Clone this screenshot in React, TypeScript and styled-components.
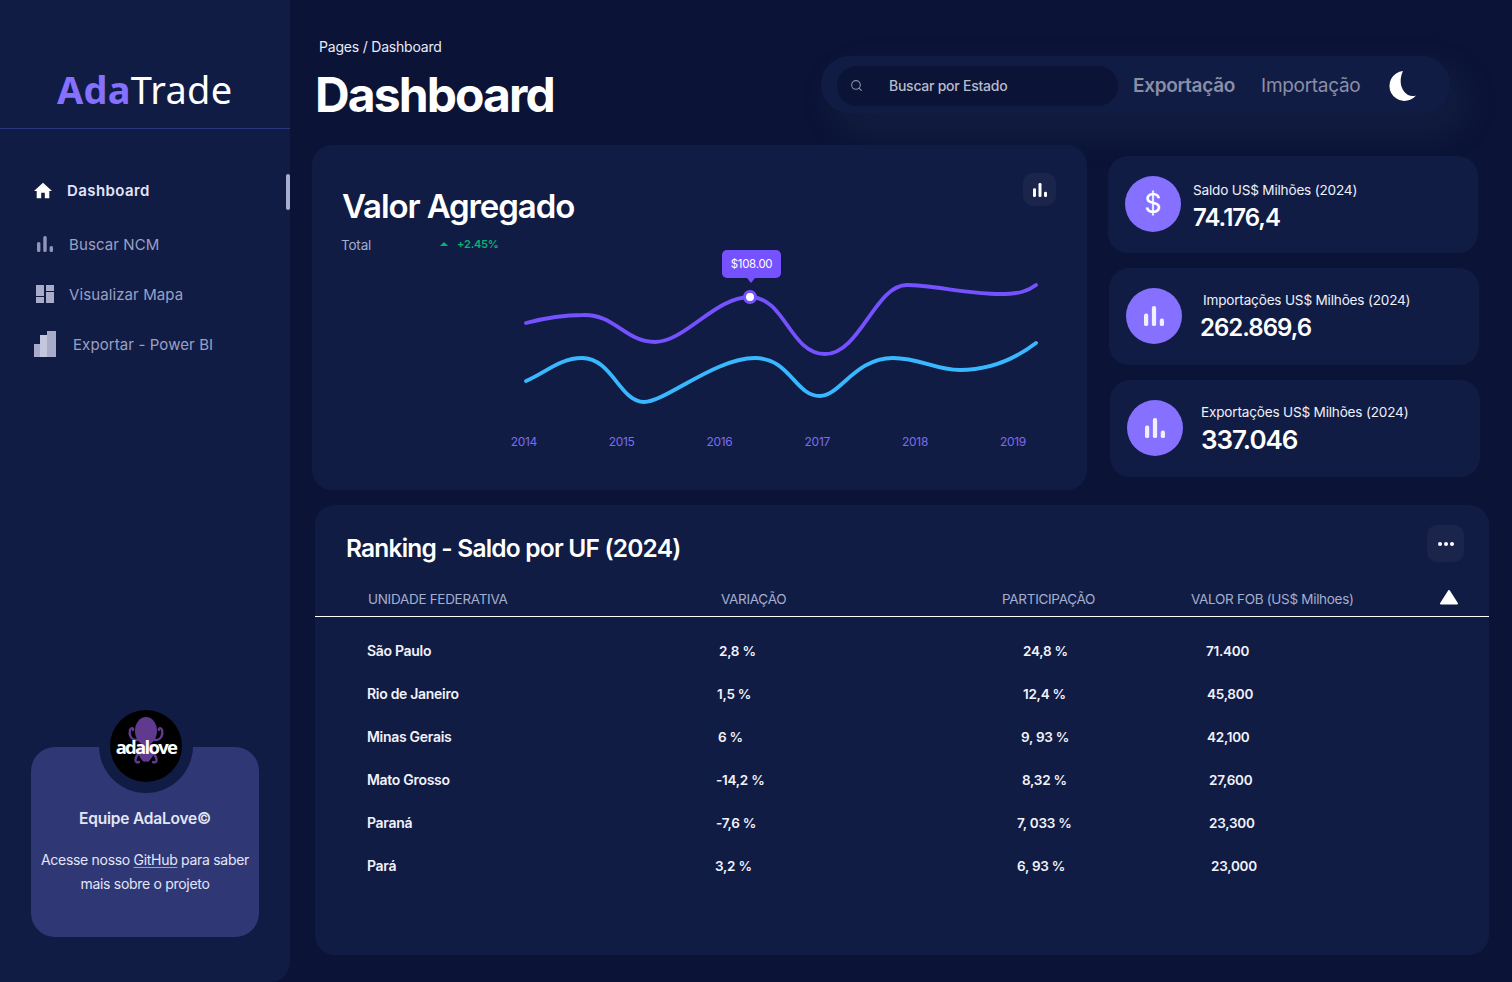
import React from "react";
import styled, { createGlobalStyle } from "styled-components";
import { Search } from "lucide-react";

const colors = {
  bg: "#0b1437",
  card: "#111c44",
  purple: "#7551ff",
  soft: "#8570ff",
  blue: "#39b8ff",
  green: "#01b574",
  muted: "#a3aed0",
  button: "#1b254b",
};

const GlobalStyle = createGlobalStyle`
  html, body { margin: 0; padding: 0; background: ${colors.bg}; }
  * { box-sizing: border-box; }
  body { font-family: "Inter", "Liberation Sans", sans-serif; color: #fff; }
`;

const Page = styled.div`
  display: flex;
  width: 1512px;
  height: 982px;
  overflow: hidden;
  background: ${colors.bg};
`;

const Sidebar = styled.aside`
  display: flex;
  flex-direction: column;
  flex: none;
  width: 290px;
  height: 982px;
  background: ${colors.card};
  border-bottom-right-radius: 20px;
`;

const Logo = styled.div`
  height: 129px;
  padding: 64px 0 0 57px;
  border-bottom: 1px solid #2b3680;
  font-family: "Noto Sans", sans-serif;
  font-size: 38px;
  line-height: 50px;
  letter-spacing: 0.25px;
  b { color: ${colors.soft}; font-weight: 700; }
`;

const Nav = styled.nav`
  margin-top: 36px;
`;

const NavItem = styled.div<{ $active?: boolean }>`
  position: relative;
  display: flex;
  align-items: center;
  height: 50px;
  margin-bottom: ${(p) => (p.$active ? "4px" : "0")};
  padding-left: 34px;
  font-size: 15px;
  letter-spacing: ${(p) => (p.$active ? "0.4px" : "0.1px")};
  font-weight: ${(p) => (p.$active ? 600 : 400)};
  color: ${(p) => (p.$active ? "#e3e5f7" : "#9aa0c4")};
`;

const NavSlot = styled.span<{ $w: number; $indent: number }>`
  display: flex;
  align-items: center;
  width: ${(p) => p.$w}px;
  padding-left: ${(p) => p.$indent}px;
`;

const ActiveBar = styled.span`
  position: absolute;
  top: 9px;
  right: 0;
  width: 4px;
  height: 36px;
  border-radius: 2px;
  background: #a9add0;
`;

const Promo = styled.div`
  position: relative;
  margin: auto 0 45px 31px;
  width: 228px;
  height: 190px;
  padding-top: 62px;
  border-radius: 24px;
  background: #2f3875;
  text-align: center;
`;

const AvatarRing = styled.div`
  position: absolute;
  top: -48px;
  left: 68px;
  display: flex;
  align-items: center;
  justify-content: center;
  width: 94px;
  height: 94px;
  border-radius: 50%;
  background: ${colors.card};
`;

const Avatar = styled.div`
  position: relative;
  width: 72px;
  height: 72px;
  border-radius: 50%;
  background: #000;
  overflow: hidden;
`;

const AvatarWord = styled.span`
  position: absolute;
  top: 24px;
  left: 0;
  width: 72px;
  text-align: center;
  font-family: "Open Sans", sans-serif;
  font-size: 18.5px;
  line-height: 26px;
  font-weight: 700;
  letter-spacing: -1.7px;
  color: #fff;
`;

const PromoTitle = styled.div`
  font-size: 15.5px;
  line-height: 20px;
  font-weight: 600;
  letter-spacing: -0.2px;
  color: #e3e5f7;
`;

const PromoText = styled.p`
  margin: 19px 0 0;
  font-size: 14px;
  line-height: 24px;
  letter-spacing: -0.3px;
  color: #e3e5f7;
  u { text-underline-offset: 2px; text-decoration-thickness: 1px; text-decoration-color: #9aa0c4; }
`;

const Main = styled.main`
  flex: 1;
  display: flex;
  flex-direction: column;
`;

const Header = styled.header`
  display: flex;
  justify-content: space-between;
  align-items: flex-start;
  height: 145px;
  padding: 39px 62px 0 25px;
`;

const Crumb = styled.div`
  margin-left: 4px;
  font-size: 14px;
  line-height: 16px;
  letter-spacing: -0.2px;
  color: #e9ebf7;
`;

const PageTitle = styled.h1`
  margin: 9px 0 0;
  font-size: 48px;
  line-height: 62px;
  font-weight: 700;
  letter-spacing: -1.9px;
`;

const Pill = styled.div`
  display: flex;
  align-items: center;
  width: 629px;
  height: 57px;
  margin-top: 17px;
  padding: 2px 0 0 16px;
  border-radius: 30px;
  background: ${colors.card};
  box-shadow: 14px 17px 40px 4px rgba(112, 144, 176, 0.08);
`;

const SearchBox = styled.div`
  display: flex;
  align-items: center;
  width: 281px;
  height: 40px;
  padding-left: 13px;
  border-radius: 20px;
  background: ${colors.bg};
  color: #8a8fa8;
`;

const SearchText = styled.span`
  margin-left: 26px;
  font-size: 14px;
  font-weight: 500;
  letter-spacing: -0.25px;
  color: #b9bccb;
`;

const Tab = styled.span<{ $strong?: boolean }>`
  margin-left: ${(p) => (p.$strong ? "15px" : "26px")};
  font-size: 19px;
  letter-spacing: -0.3px;
  font-weight: ${(p) => (p.$strong ? 600 : 400)};
  color: #8a8fa8;
`;

const MoonIcon = styled.svg`
  margin-left: 28px;
`;

const TopRow = styled.div`
  display: flex;
  gap: 21px;
  padding-left: 22px;
`;

const ChartCard = styled.section`
  position: relative;
  flex: none;
  width: 775px;
  height: 345px;
  padding-top: 39px;
  border-radius: 20px;
  background: ${colors.card};
`;

const ChartTitle = styled.h2`
  margin: 0 0 0 30px;
  font-size: 33px;
  line-height: 44px;
  font-weight: 600;
  letter-spacing: -1.1px;
`;

const ChartMeta = styled.div`
  display: flex;
  align-items: center;
  height: 18px;
  margin: 8px 0 0 29px;
  font-size: 13.5px;
  letter-spacing: -0.2px;
  color: ${colors.muted};
`;

const Trend = styled.span`
  display: flex;
  align-items: center;
  gap: 9px;
  margin: -2px 0 0 69px;
  font-size: 11px;
  font-weight: 600;
  color: ${colors.green};
  letter-spacing: -0.2px;
`;

const TrendArrow = styled.i`
  width: 0;
  height: 0;
  border-left: 4px solid transparent;
  border-right: 4px solid transparent;
  border-bottom: 4px solid ${colors.green};
`;

const IconButton = styled.div<{ $size: number; $top: number; $right: number }>`
  position: absolute;
  top: ${(p) => p.$top}px;
  right: ${(p) => p.$right}px;
  display: flex;
  align-items: center;
  justify-content: center;
  gap: 2px;
  width: ${(p) => p.$size}px;
  height: ${(p) => p.$size}px;
  border-radius: 10px;
  background: ${colors.button};
`;

const ChartSvg = styled.svg`
  display: block;
  margin-top: 9px;
`;

const Tooltip = styled.div`
  position: absolute;
  top: 105px;
  left: 410px;
  width: 59px;
  height: 28px;
  border-radius: 5px;
  background: ${colors.purple};
  font-size: 11.5px;
  line-height: 28px;
  text-align: center;
  letter-spacing: -0.3px;
  &::after {
    content: "";
    position: absolute;
    left: 25px;
    bottom: -5px;
    border-left: 4px solid transparent;
    border-right: 4px solid transparent;
    border-top: 5px solid ${colors.purple};
  }
`;

const Years = styled.div`
  display: flex;
  margin-top: 6px;
  padding-left: 163px;
`;

const Year = styled.span`
  width: 97.8px;
  text-align: center;
  font-size: 12px;
  line-height: 16px;
  letter-spacing: -0.3px;
  color: #7a6cf0;
`;

const SideColumn = styled.div`
  display: flex;
  flex-direction: column;
  gap: 15px;
  padding-top: 11px;
`;

const Stat = styled.div<{ $shift: number }>`
  display: flex;
  align-items: center;
  width: 370px;
  height: 97px;
  margin-left: ${(p) => p.$shift}px;
  padding-left: 17px;
  border-radius: 20px;
  background: ${colors.card};
`;

const StatIcon = styled.div`
  display: flex;
  align-items: center;
  justify-content: center;
  flex: none;
  width: 56px;
  height: 56px;
  margin: -2px 12px 0 0;
  border-radius: 50%;
  background: ${colors.soft};
  font-size: 27px;
  font-weight: 400;
  color: #fff;
`;

const StatBody = styled.div<{ $nudge: number; $drop?: number }>`
  padding-left: ${(p) => p.$nudge}px;
  padding-top: ${(p) => p.$drop ?? 0}px;
`;

const StatLabel = styled.div<{ $indent: number }>`
  margin-left: ${(p) => p.$indent}px;
  font-size: 13.6px;
  line-height: 18px;
  letter-spacing: -0.2px;
  color: #eef0fa;
`;

const StatValue = styled.div<{ $big?: boolean }>`
  margin-top: 4px;
  font-size: ${(p) => (p.$big ? "26px" : "24px")};
  line-height: 30px;
  font-weight: 600;
  letter-spacing: -1px;
`;

const Ranking = styled.section`
  position: relative;
  width: 1174px;
  height: 450px;
  margin: 15px 0 0 25px;
  padding-top: 25px;
  border-radius: 20px;
  background: ${colors.card};
`;

const RankingTitle = styled.h2`
  margin: 0 0 0 31px;
  font-size: 24.5px;
  line-height: 36px;
  font-weight: 600;
  letter-spacing: -0.8px;
`;

const TableHead = styled.div`
  position: relative;
  display: grid;
  grid-template-columns: 353px 281px 189px 1fr;
  align-items: center;
  height: 36px;
  margin-top: 15px;
  padding-left: 53px;
  border-bottom: 1px solid #fff;
  font-size: 13.5px;
  letter-spacing: -0.3px;
  color: ${colors.muted};
`;

const SortIcon = styled.svg`
  position: absolute;
  top: 9px;
  right: 31px;
`;

const Rows = styled.div`
  padding-top: 12px;
`;

const Row = styled.div`
  display: grid;
  grid-template-columns: 348px 300px 190px 1fr;
  align-items: center;
  height: 43px;
  padding-left: 52px;
  font-size: 13.5px;
  font-weight: 600;
  letter-spacing: -0.25px;
  color: #f1f2fa;
`;

const RowName = styled.span`
  font-size: 14px;
  letter-spacing: -0.3px;
`;

const Cell = styled.span<{ $x?: number }>`
  margin-left: ${(p) => p.$x ?? 0}px;
`;

const Dot = styled.i`
  width: 4px;
  height: 4px;
  border-radius: 50%;
  background: #fff;
`;

const Bars = ({ size, color }: { size: number; color: string }) => (
  <svg width={size} height={size} viewBox="0 0 16 16" fill={color}>
    <rect x="0" y="6" width="3.4" height="10" rx="1.5" />
    <rect x="6.3" y="0" width="3.4" height="16" rx="1.5" />
    <rect x="12.6" y="10" width="3.4" height="6" rx="1.5" />
  </svg>
);

const Octopus = () => (
  <svg width="72" height="72" viewBox="0 0 72 72" style={{ position: "absolute", left: 0, top: 0 }}>
    <ellipse cx="36" cy="21" rx="11" ry="14" fill="#5f3a8f" />
    <path d="M29 34 C28 44 28 50 36 50 C44 50 44 44 43 34Z" fill="#5f3a8f" />
    <g fill="none" stroke="#5f3a8f" strokeWidth="2.4" strokeLinecap="round">
      <path d="M27 30 C20 30 19 24 20 20 M20 20 C21 17 24 18 23 20" />
      <path d="M45 30 C52 30 53 24 52 20 M52 20 C51 17 48 18 49 20" />
      <path d="M28 44 C24 50 25 53 29 52" />
      <path d="M44 44 C48 50 47 53 43 52" />
      <path d="M33 46 C31 50 36 52 36 49 M39 46 C41 50 36 52 36 49" />
    </g>
  </svg>
);

const years = ["2014", "2015", "2016", "2017", "2018", "2019"];

const ranking = [
  { uf: "São Paulo", va: "2,8 %", vx: 4, pa: "24,8 %", px: 8, fob: "71.400", fx: 1 },
  { uf: "Rio de Janeiro", va: "1,5 %", vx: 2, pa: "12,4 %", px: 8, fob: "45,800", fx: 2 },
  { uf: "Minas Gerais", va: "6 %", vx: 3, pa: "9, 93 %", px: 6, fob: "42,100", fx: 2 },
  { uf: "Mato Grosso", va: "-14,2 %", vx: 1, pa: "8,32 %", px: 7, fob: "27,600", fx: 4 },
  { uf: "Paraná", va: "-7,6 %", vx: 1, pa: "7, 033 %", px: 2, fob: "23,300", fx: 4 },
  { uf: "Pará", va: "3,2 %", vx: 0, pa: "6, 93 %", px: 2, fob: "23,000", fx: 6 },
];

const App: React.FC = () => {
  return (
    <Page>
      <GlobalStyle />
      <Sidebar>
        <Logo>
          <b>Ada</b>Trade
        </Logo>
        <Nav>
          <NavItem $active>
            <NavSlot $w={33} $indent={0}>
              <svg width="18" height="17" viewBox="2 3 20 17" fill="#fff">
                <path d="M10 20v-6h4v6h5v-8h3L12 3 2 12h3v8z" />
              </svg>
            </NavSlot>
            Dashboard
            <ActiveBar />
          </NavItem>
          <NavItem>
            <NavSlot $w={35} $indent={3}>
              <Bars size={16} color="#8f95bb" />
            </NavSlot>
            Buscar NCM
          </NavItem>
          <NavItem>
            <NavSlot $w={35} $indent={2}>
              <svg width="18" height="18" viewBox="0 0 18 18" fill="#a8acc8">
                <rect x="0" y="0" width="8" height="11" />
                <rect x="0" y="12" width="8" height="6" />
                <rect x="10" y="0" width="8" height="6" />
                <rect x="10" y="7" width="8" height="11" />
              </svg>
            </NavSlot>
            Visualizar Mapa
          </NavItem>
          <NavItem>
            <NavSlot $w={39} $indent={0}>
              <svg width="22" height="26" viewBox="0 0 22 26">
                <rect x="0" y="13" width="6" height="13" fill="#a8acc8" />
                <rect x="6" y="4" width="7" height="22" fill="#c3c6dd" />
                <rect x="13" y="0" width="9" height="26" fill="#a8acc8" />
              </svg>
            </NavSlot>
            Exportar - Power BI
          </NavItem>
        </Nav>
        <Promo>
          <AvatarRing>
            <Avatar>
              <Octopus />
              <AvatarWord>adalove</AvatarWord>
            </Avatar>
          </AvatarRing>
          <PromoTitle>Equipe AdaLove©</PromoTitle>
          <PromoText>
            Acesse nosso <u>GitHub</u> para saber
            <br />
            mais sobre o projeto
          </PromoText>
        </Promo>
      </Sidebar>

      <Main>
        <Header>
          <div>
            <Crumb>Pages / Dashboard</Crumb>
            <PageTitle>Dashboard</PageTitle>
          </div>
          <Pill>
            <SearchBox>
              <Search size={13} strokeWidth={2} />
              <SearchText>Buscar por Estado</SearchText>
            </SearchBox>
            <Tab $strong>Exportação</Tab>
            <Tab>Importação</Tab>
            <MoonIcon width="28" height="30" viewBox="0 0 28 30" fill="#fff">
              <path d="M15 0 A15 15 0 1 0 28 24.5 C18 28 8 15 15 0Z" />
            </MoonIcon>
          </Pill>
        </Header>

        <TopRow>
          <ChartCard>
            <ChartTitle>Valor Agregado</ChartTitle>
            <ChartMeta>
              Total
              <Trend>
                <TrendArrow />
                +2.45%
              </Trend>
            </ChartMeta>
            <IconButton $size={33} $top={28} $right={31}>
              <Bars size={14} color="#fff" />
            </IconButton>
            <ChartSvg width="775" height="165" viewBox="312 263 775 165" fill="none">
              <path
                d="M526 323 C545 318 565 315 583 315 C615 314 625 342 655 342 C685 342 715 297 750 297 C785 297 790 354 825 354 C860 354 875 285 907 285 C930 285 970 294 1000 294 C1020 294 1028 291 1036 285"
                stroke={colors.purple}
                strokeWidth="3.8"
                strokeLinecap="round"
              />
              <path
                d="M526 381 C545 373 560 358 582 358 C612 358 620 402 644 402 C665 402 715 358 755 358 C790 358 795 396 820 396 C840 396 855 358 893 358 C920 358 935 370 960 370 C990 370 1015 359 1036 343"
                stroke={colors.blue}
                strokeWidth="3.8"
                strokeLinecap="round"
              />
              <circle cx="750" cy="297" r="5.5" fill="#fff" stroke={colors.purple} strokeWidth="3" />
            </ChartSvg>
            <Tooltip>$108.00</Tooltip>
            <Years>
              {years.map((y) => (
                <Year key={y}>{y}</Year>
              ))}
            </Years>
          </ChartCard>

          <SideColumn>
            <Stat $shift={0}>
              <StatIcon>$</StatIcon>
              <StatBody $nudge={0} $drop={4}>
                <StatLabel $indent={0}>Saldo US$ Milhões (2024)</StatLabel>
                <StatValue>74.176,4</StatValue>
              </StatBody>
            </Stat>
            <Stat $shift={1}>
              <StatIcon>
                <Bars size={20} color="#eef0ff" />
              </StatIcon>
              <StatBody $nudge={6}>
                <StatLabel $indent={3}>Importações US$ Milhões (2024)</StatLabel>
                <StatValue>262.869,6</StatValue>
              </StatBody>
            </Stat>
            <Stat $shift={2}>
              <StatIcon>
                <Bars size={20} color="#eef0ff" />
              </StatIcon>
              <StatBody $nudge={6}>
                <StatLabel $indent={0}>Exportações US$ Milhões (2024)</StatLabel>
                <StatValue $big>337.046</StatValue>
              </StatBody>
            </Stat>
          </SideColumn>
        </TopRow>

        <Ranking>
          <RankingTitle>Ranking - Saldo por UF (2024)</RankingTitle>
          <IconButton $size={37} $top={20} $right={25}>
            <Dot />
            <Dot />
            <Dot />
          </IconButton>
          <TableHead>
            <span>UNIDADE FEDERATIVA</span>
            <span>VARIAÇÃO</span>
            <span>PARTICIPAÇÃO</span>
            <span>VALOR FOB (US$ Milhoes)</span>
            <SortIcon width="18" height="15" viewBox="0 0 18 15" fill="#fff">
              <path d="M9 1 L17 13.5 H1 Z" stroke="#fff" strokeWidth="2" strokeLinejoin="round" />
            </SortIcon>
          </TableHead>
          <Rows>
            {ranking.map((r) => (
              <Row key={r.uf}>
                <RowName>{r.uf}</RowName>
                <Cell $x={r.vx}>{r.va}</Cell>
                <Cell $x={r.px}>{r.pa}</Cell>
                <Cell $x={r.fx}>{r.fob}</Cell>
              </Row>
            ))}
          </Rows>
        </Ranking>
      </Main>
    </Page>
  );
};

export default App;
